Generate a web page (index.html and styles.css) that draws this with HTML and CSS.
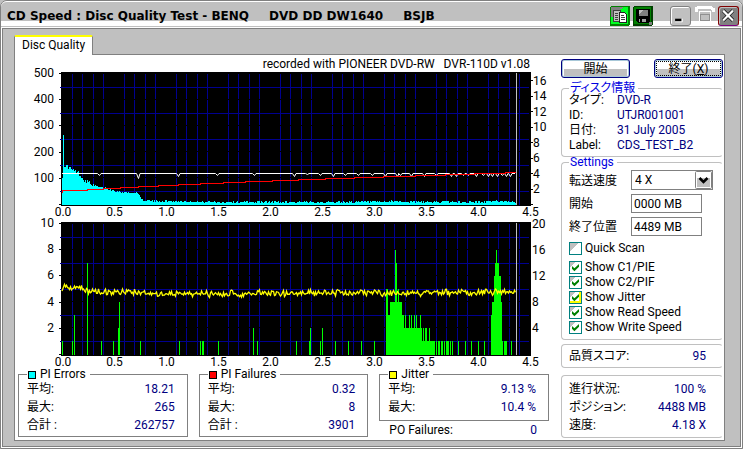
FILE: index.html
```html
<!DOCTYPE html>
<html lang="ja">
<head>
<meta charset="utf-8">
<title>CD Speed : Disc Quality Test</title>
<link rel="stylesheet" href="styles.css">
</head>
<body>
<div class="window">
  <header class="titlebar">
    <h1 class="title"><span>CD Speed : Disc Quality Test - BENQ</span><span>DVD DD DW1640</span><span>BSJB</span></h1>
    <div class="tools">
      <button class="tool" type="button" aria-label="Copy">
        <svg viewBox="0 0 20 20" shape-rendering="crispEdges"><rect width="20" height="20" rx="2" fill="#008000"/><rect x="1" y="1" width="17" height="17" fill="#0f2"/><path d="M1 1H14L8 5L3 11H1z" fill="#808080"/><path d="M3.500 4.500h7v11h-7z" fill="#c0c0c0" stroke="#404040"/><path d="M9.500 6.500h5l2 2v8h-7z" fill="#fff" stroke="#202020"/><path d="M5 7h3M5 9h3M5 11h3M5 13h3M11 9h3M11 11h4M11 13h4" stroke="#404040"/></svg>
      </button>
      <button class="tool" type="button" aria-label="Save">
        <svg viewBox="0 0 20 20" shape-rendering="crispEdges"><rect width="20" height="20" rx="2" fill="#004000"/><rect x="1" y="1" width="17" height="17" fill="#008000"/><path d="M3 3h14v12l-2 2H5l-2-2z" fill="#000"/><path d="M6 4h9v6H6z" fill="#808080"/><path d="M6 4h4L6 8z" fill="#c0c0c0"/><path d="M6 13h7v3H6z" fill="#a0a0a0"/><path d="M7 13h2v3H7z" fill="#000"/><path d="M16 16h3v3h-3z" fill="#808080"/></svg>
      </button>
    </div>
    <div class="controls">
      <button class="ctl minimize" type="button" aria-label="Minimize"><svg viewBox="0 0 20 20"><path d="M4 13h7v3H4z" fill="#000"/><path d="M4 16.500h8V13" fill="none" stroke="#fff"/></svg></button>
      <button class="ctl maximize" type="button" aria-label="Maximize"><svg viewBox="0 0 20 20" fill="none" shape-rendering="crispEdges"><path d="M1.500 6V3l2-1.500h13l2 1.500v3" stroke="#fff" stroke-width="3"/><path d="M4.500 5.500h11v10h-11zM4.500 8h11" stroke="#fff"/><path d="M5.500 8.500h9v6h-9z" stroke="#909090"/></svg></button>
      <button class="ctl close" type="button" aria-label="Close"><svg viewBox="0 0 20 20"><path d="M4 4L15 15M15 4L4 15" stroke="#000" stroke-width="4"/><path d="M4 4L15 15M15 4L4 15" stroke="#fff" stroke-width="2.500"/></svg></button>
    </div>
  </header>

  <main class="frame">
    <nav class="tabs"><a class="tab" href="#quality">Disc Quality</a></nav>
    <div class="panel" id="quality">
      <div class="results">
        <p class="caption">recorded with PIONEER DVD-RW&nbsp;&nbsp; DVR-110D v1.08</p>
        <svg class="chart" id="errors" viewBox="18 72 531 150" role="img" aria-label="PI Errors"></svg>
        <svg class="chart" id="failures" viewBox="18 222 531 147" role="img" aria-label="PI Failures"></svg>
        <div class="stats">
          <fieldset class="stat">
            <legend><i class="swatch cyan"></i>PI Errors</legend>
            <dl><dt>平均:</dt><dd>18.21</dd><dt>最大:</dt><dd>265</dd><dt>合計 :</dt><dd>262757</dd></dl>
          </fieldset>
          <fieldset class="stat">
            <legend><i class="swatch red"></i>PI Failures</legend>
            <dl><dt>平均:</dt><dd>0.32</dd><dt>最大:</dt><dd>8</dd><dt>合計 :</dt><dd>3901</dd></dl>
          </fieldset>
          <div>
            <fieldset class="stat jitter">
              <legend><i class="swatch yellow"></i>Jitter</legend>
              <dl><dt>平均:</dt><dd>9.13 %</dd><dt>最大:</dt><dd>10.4 %</dd></dl>
            </fieldset>
            <dl class="po"><dt>PO Failures:</dt><dd>0</dd></dl>
          </div>
        </div>
      </div>

      <aside class="side">
        <div class="actions">
          <button class="action" type="button">開始</button>
          <button class="action focused" type="button">終了(<u>X</u>)</button>
        </div>
        <fieldset class="group disc">
          <legend>ディスク情報</legend>
          <dl><dt>タイプ:</dt><dd>DVD-R</dd><dt>ID:</dt><dd>UTJR001001</dd><dt>日付:</dt><dd>31 July 2005</dd><dt>Label:</dt><dd>CDS_TEST_B2</dd></dl>
        </fieldset>
        <fieldset class="group settings">
          <legend>Settings</legend>
          <div class="fields">
            <label for="speed">転送速度</label>
            <div class="combo">
              <select id="speed"><option>4 X</option></select>
              <svg class="arrow" viewBox="0 0 17 18"><rect x=".5" y=".5" width="16" height="17" rx="1" fill="#fff" stroke="#808080"/><path d="M2 7h13v9H2z" fill="#c0c0c0"/><path d="M4.500 7l4 4 4-4" fill="none" stroke="#000" stroke-width="2.500"/></svg>
            </div>
            <label for="start">開始</label><input class="text" id="start" type="text" value="0000 MB">
            <label for="end">終了位置</label><input class="text" id="end" type="text" value="4489 MB">
          </div>
          <label class="check quick"><input type="checkbox">Quick Scan</label>
          <label class="check"><input type="checkbox" checked>Show C1/PIE</label>
          <label class="check"><input type="checkbox" checked>Show C2/PIF</label>
          <label class="check hot"><input type="checkbox" checked>Show Jitter</label>
          <label class="check"><input type="checkbox" checked>Show Read Speed</label>
          <label class="check"><input type="checkbox" checked>Show Write Speed</label>
        </fieldset>
        <dl class="group score"><dt>品質スコア:</dt><dd>95</dd></dl>
        <dl class="group progress"><dt>進行状況:</dt><dd>100 %</dd><dt>ポジション:</dt><dd>4488 MB</dd><dt>速度:</dt><dd>4.18 X</dd></dl>
      </aside>
    </div>
  </main>
</div>
<script src="charts.js"></script>
</body>
</html>
```

FILE: styles.css
```css
* { box-sizing: border-box; }

body {
  margin: 0;
  background: #c0c0c0;
  color: #000;
  font: 12px/15px Roboto, "Noto Sans CJK JP", sans-serif;
  font-feature-settings: "palt";
}

button, input, select { font: inherit; color: inherit; margin: 0; }
fieldset, dl, p, h1 { margin: 0; padding: 0; min-width: 0; }
dd { margin: 0; color: #000080; }
a { color: inherit; text-decoration: none; }

.window {
  display: flex;
  flex-direction: column;
  min-height: 100vh;
  border: 1px solid #808080;
  border-radius: 7px 7px 0 0;
  background: #c0c0c0;
}

/* Title bar */
.titlebar {
  display: flex;
  height: 27px;
  padding: 4px 3px 2px 6px;
  border-top: 1px solid #fff;
  border-radius: 6px 6px 0 0;
  background: linear-gradient(#c0c0c0 19px, #fff 19px, #fff 24px, #c0c0c0 24px);
}
.title {
  display: flex;
  flex: 1;
  gap: 20px;
  font: bold 12px/20px "DejaVu Sans", sans-serif;
  white-space: nowrap;
}
.tools, .controls { display: flex; gap: 3px; }
.tools { margin-right: 17px; }
.tool, .ctl {
  width: 20px;
  height: 20px;
  padding: 0;
  border: 0;
  background: none;
}
.tool svg, .ctl svg { display: block; width: 100%; height: 100%; }
.ctl { width: 21px; }
.minimize {
  border: 1px solid #808080;
  border-radius: 3px;
  background: #c0c0c0;
  box-shadow: inset 1px 1px #fff;
}
.close {
  border: 1px solid #800000;
  border-bottom-color: #800080;
  border-radius: 3px;
  background: #808080;
  box-shadow: inset 1px 1px #c0c0c0;
}

/* Frame, tab and page */
.frame {
  display: flex;
  flex: 1;
  flex-direction: column;
  margin: 0 1px 1px;
  padding: 6px 15px 5px 11px;
  border: 1px solid #808080;
  box-shadow: 0 0 0 1px #fff;
}
.tabs { display: flex; }
.tab {
  z-index: 1;
  height: 20px;
  margin-bottom: -1px;
  padding: 1px 7px 0;
  border: solid #808080;
  border-width: 0 1px;
  border-top: 2px solid #ff0;
  border-radius: 2px 2px 0 0;
  background: #fff;
}
.panel {
  display: grid;
  flex: 1;
  grid-template-columns: 1fr 162px;
  gap: 12px;
  align-items: start;
  padding: 0 1px 1px 3px;
  border: 1px solid #808080;
  background: #fff;
}

/* Charts */
.caption { height: 17px; padding-right: 19px; line-height: 18px; text-align: right; }
.chart { display: block; width: 100%; overflow: visible; }
.chart text { font-size: 12px; fill: #000; }
.left { text-anchor: end; }
.middle { text-anchor: middle; }
.stroke { fill: none; }

/* Statistics */
.stats { display: grid; grid-template-columns: repeat(3, 1fr); gap: 11px; align-items: start; }
.stat { padding: 0 12px 2px 8px; border: 1px solid #808080; }
.stat legend {
  display: flex;
  align-items: center;
  gap: 4px;
  padding: 0 4px 0 1px;
  line-height: 11px;
}
.jitter { padding-bottom: 4px; }
.stat dl, .po, .progress, .score {
  display: grid;
  grid-template-columns: auto 1fr;
  line-height: 18px;
}
.stat dd, .po dd, .progress dd, .score dd { text-align: right; }
.swatch { width: 8px; height: 8px; border: 1px solid #000; }
.cyan { background: #0ff; }
.red { background: #f00; }
.yellow { background: #ff0; }
.po { padding: 0 12px 0 10px; }

/* Side column */
.side { padding-top: 4px; }
.actions { display: flex; justify-content: space-between; margin: 0 0 5px; }
.action {
  width: 69px;
  height: 19px;
  padding: 1px 0 0;
  border: 1px solid #000080;
  border-radius: 3px;
  background: linear-gradient(#fff 8px, #c0c0c0 8px) center / calc(100% - 4px) calc(100% - 2px) no-repeat #fff;
  box-shadow: inset 0 0 0 1px #a8c8d8;
  line-height: 15px;
}
.focused { outline: 1px dotted #000; outline-offset: -3px; }
.group {
  padding: 0 16px 0 7px;
  border: 1px solid #c0c0c0;
  border-right-color: transparent;
  border-radius: 4px;
}
.group legend { padding: 0 3px 0 1px; line-height: 10px; color: #0000e0; }
.disc { padding-bottom: 3px; }
.disc dl { display: grid; grid-template-columns: 48px 1fr; }
.settings { padding-right: 9px; padding-bottom: 4px; }
.fields {
  display: grid;
  grid-template-columns: 62px 1fr;
  grid-template-rows: 20px 19px 19px;
  gap: 4px 0;
  align-items: center;
  padding-top: 3px;
}
.fields label { line-height: 17px; align-self: end; }
.combo { position: relative; height: 20px; }
.combo select, .text {
  width: 100%;
  height: 100%;
  padding: 0 3px;
  border: 1px solid #808080;
  border-radius: 0;
  background: #fff;
  appearance: none;
}
.text { width: 71px; padding: 0 2px; }
.arrow { position: absolute; top: 1px; right: 1px; width: 17px; height: 18px; pointer-events: none; }
.check { display: flex; align-items: center; gap: 3px; height: 15px; white-space: nowrap; }
.quick { margin: 5px 0 4px; }
.check input {
  width: 13px;
  height: 13px;
  border: 1px solid #008080;
  background: linear-gradient(135deg, #c0c0c0 40%, #fff 40%);
  appearance: none;
}
.check input:checked { background: linear-gradient(135deg, #c0c0c0 25%, #fff 25%); }
.check input:checked::before {
  display: block;
  height: 11px;
  background: #008000;
  clip-path: polygon(18% 36%, 40% 56%, 82% 18%, 82% 44%, 40% 84%, 18% 62%);
  content: "";
}
.hot input:checked { box-shadow: inset -2px -2px #ff0; }
.score { margin-top: 4px; padding-top: 2px; padding-bottom: 2px; }
.progress { margin-top: 7px; padding-top: 4px; padding-bottom: 3px; }
```

FILE: charts.js
```js
const NS = "http://www.w3.org/2000/svg";

function add(svg, name, attrs, text) {
  const node = document.createElementNS(NS, name);
  for (const key in attrs) node.setAttribute(key, attrs[key]);
  if (text !== undefined) node.textContent = text;
  svg.append(node);
}

function stroke(svg, d, color, width = 1) {
  add(svg, "path", { d, stroke: color, "stroke-width": width, class: "stroke", "shape-rendering": "crispEdges" });
}

// Deterministic noise, so each load draws the same trace
let seed = 17;
function noise() {
  seed = (seed * 16807) % 2147483647;
  return seed / 2147483647;
}

// Linear interpolation through [x, y] points
function at(points, x) {
  let i = 1;
  while (i < points.length - 1 && points[i][0] < x) i++;
  const [x0, y0] = points[i - 1];
  const [x1, y1] = points[i];
  return y0 + (y1 - y0) * (x - x0) / (x1 - x0);
}

function plot(svg, top, labels) {
  add(svg, "rect", { x: 61, y: top, width: 470, height: 134 });
  let rules = "", grid = "", ticks = "", minor = "";
  for (let i = 1; i < 45; i++) {
    if (i % 5 === 0) continue;
    const x = Math.floor(62 + i * 10.4) + 0.5;
    for (let r = 0; r < 5; r++) {
      const y = top + 2 + r * 26;
      grid += `M${x} ${y}v${r === 4 ? 27 : 25}`;
    }
  }
  for (let r = 0; r < 5; r++) {
    const y = top + 15.5 + r * 26;
    rules += `M61 ${y}H529`;
    minor += `M60 ${y}h1`;
  }
  for (let r = 0; r < 6; r++) ticks += `M59 ${top + 1.5 + Math.round(r * 26.2)}h2`;
  stroke(svg, grid, "#000090");
  stroke(svg, rules, "#000090");
  stroke(svg, minor, "#000080");
  stroke(svg, ticks, "#000");
  labels.forEach((label, r) => add(svg, "text", { x: 54, y: top + 5 + r * 26.2, class: "left" }, label));
  for (let i = 0; i <= 9; i++) {
    add(svg, "text", { x: i ? 62.5 + i * 52 : 63, y: top + 144, class: "middle" }, (i / 2).toFixed(1));
  }
}

const errors = document.getElementById("errors");
plot(errors, 72, ["500", "400", "300", "200", "100"]);
let speedTicks = "";
for (let v = 0; v <= 16; v += 2) {
  const y = 204.5 - v * 7.75;
  speedTicks += `M531 ${y}h2`;
  if (v) add(errors, "text", { x: 533, y: y + 4 }, v);
}
stroke(errors, speedTicks, "#000");

const envelope = [[64, 166], [68, 168], [72, 171], [78, 174], [84, 181], [92, 185], [98, 187], [106, 188],
  [112, 190], [120, 192], [138, 193], [141, 200], [152, 201], [220, 202], [340, 202], [386, 202],
  [395, 201], [405, 202], [480, 202], [500, 201], [516, 202]];
let bars = "M62.500 205V178M63.500 205V135";
for (let x = 64; x < 516; x++) {
  const jitter = noise() * (x < 90 ? 4 : 2) - 1;
  bars += `M${x}.500 205V${Math.round(at(envelope, x) - jitter)}`;
}
stroke(errors, bars, "#0ff");

const dips = [[99, 2], [138, 5], [178, 3], [217, 2], [254, 2], [294, 3], [307, 1], [320, 2], [333, 3], [345, 2],
  [358, 2], [372, 2], [385, 3], [397, 3], [400, 2], [411, 3], [424, 3], [436, 2], [451, 3], [456, 3], [463, 2],
  [468, 2], [476, 3], [483, 2], [488, 3], [492, 3], [497, 3], [502, 2], [506, 3], [510, 3]];
let read = "M62 173.500";
for (const [x, depth] of dips) read += `H${x - 1.5}L${x + 0.5} ${173.5 + depth}L${x + 2} 173.500`;
add(errors, "path", { d: read + "H515", stroke: "#fff", class: "stroke" });

// Write speed climbs in steps of one pixel
const steps = [87, 103, 120, 138, 158, 178, 200, 223, 245, 272, 298, 325, 354, 383, 415, 445, 474, 505, 516];
let write = "M62.500 193V190.500";
steps.forEach((x, i) => { write += `V${190.5 - i}H${x}`; });
stroke(errors, write, "#f00");
stroke(errors, "M516.500 73V205", "#c0c0c0");

const failures = document.getElementById("failures");
plot(failures, 222, ["10", "8", "6", "4", "2"]);
["20", "16", "12", "8", "4"].forEach((label, r) => add(failures, "text", { x: 532, y: 228 + r * 26 }, label));

// [first x, last x, failures]
const counts = [[62, 62, 1], [72, 72, 1], [74, 74, 3], [87, 87, 7], [101, 101, 1], [113, 113, 1], [118, 118, 2],
  [119, 119, 4], [140, 140, 1], [179, 179, 1], [200, 200, 1], [202, 203, 1], [218, 218, 1], [253, 253, 2],
  [257, 257, 1], [296, 296, 1], [309, 309, 1], [310, 310, 2], [320, 320, 1], [322, 322, 2], [335, 335, 1],
  [348, 348, 1], [361, 361, 1], [374, 374, 1], [386, 387, 5], [388, 389, 3], [390, 394, 4], [395, 395, 8],
  [396, 396, 7], [397, 397, 4], [398, 398, 5], [399, 401, 4], [402, 403, 3], [404, 404, 2], [405, 405, 3],
  [406, 408, 2], [409, 409, 3], [410, 410, 2], [411, 411, 3], [412, 413, 2], [414, 414, 3], [415, 415, 2],
  [416, 416, 3], [417, 419, 2], [420, 420, 3], [421, 421, 2], [422, 422, 1], [423, 423, 2], [424, 424, 1],
  [425, 426, 2], [427, 428, 1], [429, 429, 2], [430, 434, 1], [436, 436, 1], [438, 439, 1], [441, 442, 1],
  [444, 444, 1], [446, 448, 1], [450, 450, 1], [452, 452, 1], [458, 458, 1], [465, 465, 1], [471, 471, 1],
  [478, 478, 1], [484, 484, 1], [491, 491, 3], [492, 493, 4], [494, 494, 6], [495, 495, 7], [496, 496, 8],
  [497, 498, 7], [499, 500, 6], [501, 501, 4], [502, 502, 1], [504, 504, 1], [505, 506, 1], [511, 511, 1]];
let green = "";
for (const [from, to, n] of counts) {
  for (let x = from; x <= to; x++) green += `M${x}.500 355V${Math.round(354.5 - n * 13.1)}`;
}
stroke(failures, green, "#0f0");

const level = [[62, 290], [64, 287], [74, 288], [84, 289], [92, 292], [120, 292], [160, 293], [200, 294],
  [300, 293], [400, 293], [480, 292], [500, 291], [516, 292]];
let jitterLine = "M62 291";
for (let x = 63; x < 516; x++) {
  jitterLine += `L${x}.500 ${(at(level, x) + (noise() + noise() - 1) * 4).toFixed(1)}`;
}
add(failures, "path", { d: jitterLine, stroke: "#ff0", "stroke-width": 1.3, class: "stroke" });
stroke(failures, "M516.500 223V355", "#c0c0c0");
```
